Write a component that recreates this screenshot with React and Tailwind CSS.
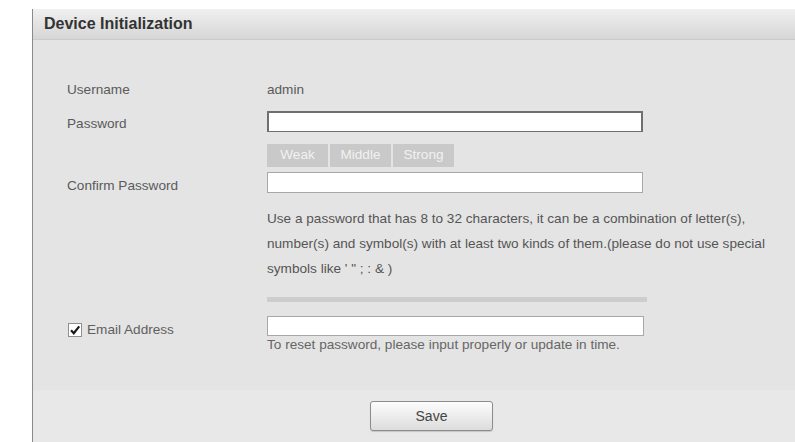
export default function App() {
  const strength = ['Weak', 'Middle', 'Strong']

  return (
    <div className="min-h-[442px] bg-white pt-[9px] pl-[32px] font-['Liberation_Sans',Arial,sans-serif] text-[13.6px] text-[#5a5a5a]">
      <div className="border-l border-[#8a8a8a] bg-[#e4e4e4] h-[433px] flex flex-col">
        {/* Title bar */}
        <div className="h-[31px] flex items-center pl-[11px] bg-gradient-to-b from-[#f0f0f0] to-[#d6d6d6] border-b border-[#cbcbcb]">
          <span className="text-[16px] font-bold text-[#333]">Device Initialization</span>
        </div>

        {/* Form body */}
        <div className="h-[350px] pt-[40px] pl-[34px]">
          <div className="flex h-[20px] items-center">
            <span className="w-[200px]">Username</span>
            <span>admin</span>
          </div>

          <div className="flex mt-[11px] h-[21px]">
            <span className="w-[200px] pt-[3px]">Password</span>
            <div className="w-[376px] h-[21px] bg-white border border-[#6f6f6f] border-t-2 border-l-2 border-r-2" />
          </div>

          <div className="flex mt-[12px] ml-[200px] gap-[2px]">
            {strength.map((s) => (
              <div key={s} className="w-[61px] h-[23px] bg-[#c9c9c9] flex items-center justify-center text-[#f2f2f2]">
                {s}
              </div>
            ))}
          </div>

          <div className="flex mt-[5px] h-[21px]">
            <span className="w-[200px] pt-[4px]">Confirm Password</span>
            <div className="w-[376px] h-[21px] bg-white border border-[#a8a8a8]" />
          </div>

          <div className="ml-[200px] mt-[13px] w-[508px] leading-[25px] text-[#555]">
            Use a password that has 8 to 32 characters, it can be a combination of letter(s), number(s) and symbol(s) with at least two kinds of them.(please do not use special symbols like ' " ; : &amp; )
          </div>

          <div className="ml-[200px] mt-[16px] w-[380px] h-[5px] bg-[#cdcdcd]" />

          <div className="flex mt-[14px]">
            <label className="w-[200px] flex items-start gap-[5px] pt-[6px]">
              <span className="ml-[1px] mt-[1px] w-[14px] h-[14px] bg-white border border-[#8f8f8f] flex items-center justify-center">
                <svg viewBox="0 0 12 12" className="w-[12px] h-[12px]">
                  <path d="M2 6.2 L4.8 9.2 L10.2 2.4" fill="none" stroke="#1a1a1a" strokeWidth="2.2" />
                </svg>
              </span>
              <span className="leading-[16px] text-[#5f5f5f]">Email Address</span>
            </label>
            <div>
              <div className="w-[377px] h-[20px] bg-white border border-[#a8a8a8]" />
              <div className="leading-[18px] text-[#666]">
                To reset password, please input properly or update in time.
              </div>
            </div>
          </div>
        </div>

        {/* Footer */}
        <div className="flex-1 bg-[#e8e8e8] pt-[11px] pl-[337px]">
          <button className="w-[123px] h-[30px] rounded-[3px] border border-[#8c8c8c] bg-gradient-to-b from-[#fdfdfd] to-[#dcdcdc] text-[14px] text-[#444] shadow-[0_1px_1px_rgba(0,0,0,0.15)]">
            Save
          </button>
        </div>
      </div>
    </div>
  )
}
